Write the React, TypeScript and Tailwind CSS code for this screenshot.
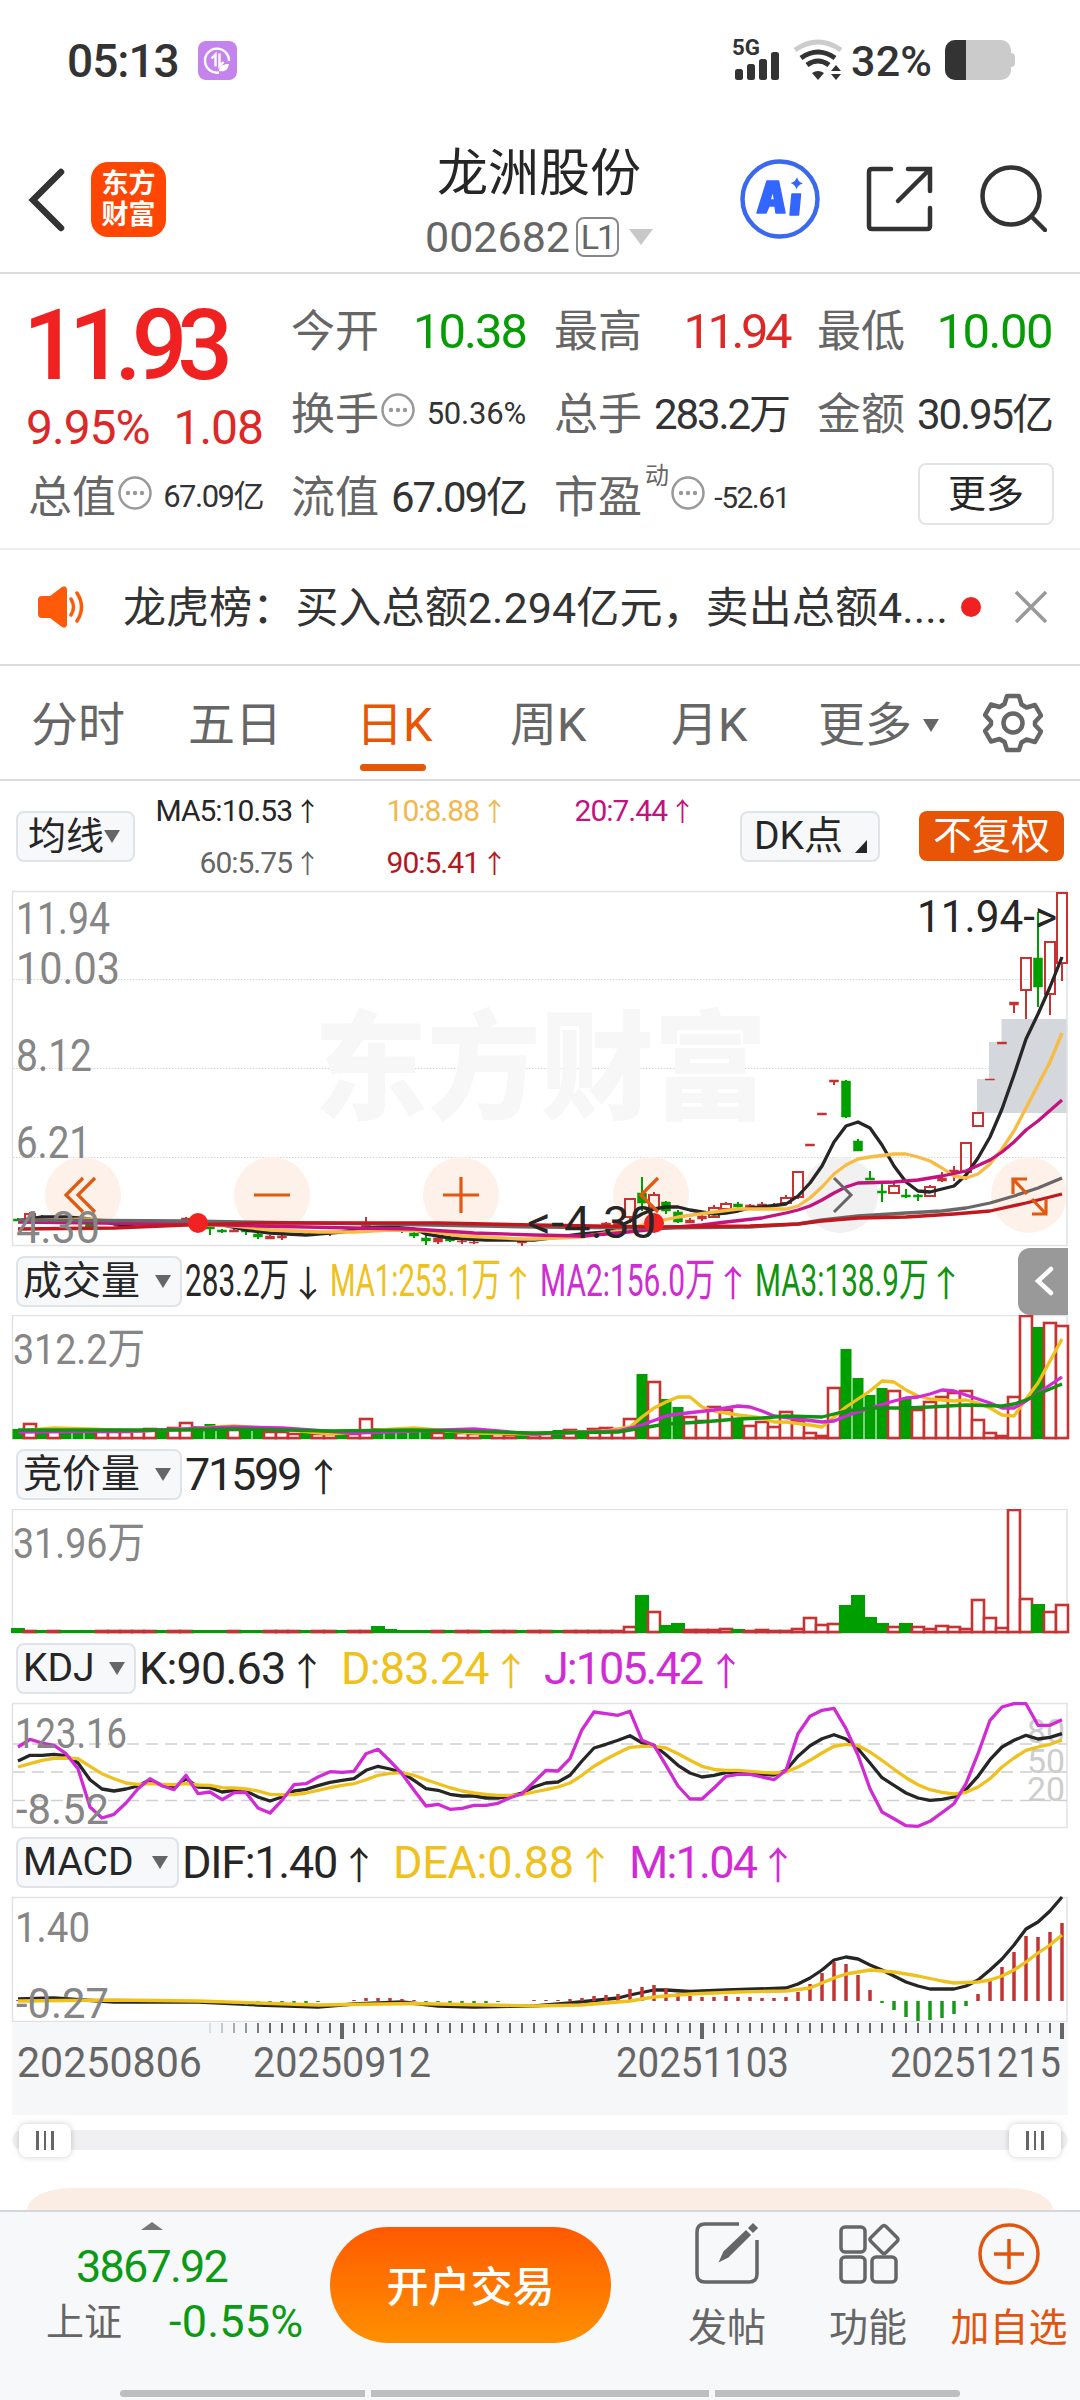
import type { ReactNode } from 'react'
import clsx from 'clsx'

const RED = '#c83232'
const GREEN = '#009f00'
const BLACK = '#262626'
const YELLOW = '#efc11c'
const MAGENTA = '#d02bd4'
const ORANGE = '#e2590f'

type Point = [number, number]

// 88 trading days, 12px apart
const dayX = (i: number) => 18 + i * 12

const smooth = (points: Point[]) => points.map(([i, y]) => `${dayX(i)},${y}`).join(' ')
const series = (values: number[], base: number) =>
  values.map((v, i) => `${dayX(i)},${((v - base) / 3).toFixed(1)}`).join(' ')

const MA5: Point[] = [
  [0, 330], [1, 328], [2, 326], [4, 326], [6, 328], [8, 333], [10, 334], [14, 333], [17, 334], [19, 339], [21, 342],
  [24, 344], [27, 341], [29, 337], [31, 336], [33, 338], [34, 343], [36, 347], [39, 349], [43, 349], [47, 343],
  [49, 341], [50, 336], [51, 330], [52, 323], [53, 318], [54, 316], [55, 316], [56, 319], [57, 321], [58, 323],
  [59, 322], [60, 320], [61, 317], [62, 316], [64, 313], [65, 305], [66, 292], [67, 275], [68, 251], [69, 235],
  [70, 231], [71, 237], [72, 254], [73, 275], [74, 291], [75, 300], [76, 301], [77, 298], [78, 295], [79, 284],
  [80, 267], [81, 246], [82, 218], [83, 184], [84, 148], [85, 123], [86, 96], [87, 66],
]
const MA10: Point[] = [
  [0, 330], [6, 328], [10, 333], [14, 333], [18, 335], [21, 339], [25, 341], [28, 341], [31, 339], [34, 340],
  [37, 345], [42, 348], [43, 348], [47, 346], [49, 342], [51, 337], [53, 331], [55, 326], [58, 321], [60, 318],
  [64, 318], [65, 315], [66, 307], [67, 296], [68, 283], [69, 274], [70, 268], [71, 266], [73, 263], [74, 263],
  [75, 266], [76, 270], [77, 277], [78, 285], [79, 287], [80, 283], [81, 273], [82, 258], [83, 240], [84, 217],
  [85, 194], [86, 171], [87, 142],
]
const MA20: Point[] = [
  [0, 331], [14, 333], [20, 335], [28, 337], [33, 338], [38, 342], [43, 344], [47, 345], [50, 342], [54, 337],
  [57, 334], [59, 331], [62, 327], [64, 322], [65, 319], [66, 315], [67, 309], [68, 302], [69, 296], [70, 292],
  [73, 291], [75, 289], [77, 285], [79, 280], [81, 269], [82, 261], [83, 251], [84, 239], [85, 230], [87, 209],
]
const MA60: Point[] = [
  [0, 329], [14, 330], [30, 333], [43, 336], [53, 337], [61, 336], [65, 333], [67, 329], [70, 325], [74, 322],
  [77, 320], [79, 317], [81, 312], [83, 305], [85, 297], [87, 287],
]
const MA90: Point[] = [
  [0, 338], [8, 337], [14, 334], [20, 332], [35, 332], [43, 334], [53, 336], [61, 335], [65, 333], [67, 330],
  [70, 327], [74, 326], [78, 323], [81, 320], [84, 312], [87, 303],
]

// day, high, body top, body bottom, low, rising
type Candle = [number, number, number, number, number, boolean]
const CANDLES: Candle[] = [
  [0, 327, 328, 330, 330, false], [1, 321, 323, 328, 328, true], [2, 324, 326, 328, 328, false],
  [6, 332, 333, 336, 336, false], [14, 326, 327, 329, 329, true], [16, 336, 336, 338, 344, false],
  [17, 338, 339, 341, 342, false], [18, 338, 339, 341, 341, true], [19, 339, 339, 341, 344, false],
  [20, 340, 343, 346, 348, false], [21, 344, 345, 348, 348, true], [22, 344, 345, 347, 349, true],
  [26, 340, 341, 342, 345, true], [29, 326, 333, 336, 338, true], [31, 334, 335, 336, 338, false],
  [32, 337, 338, 339, 342, false], [33, 341, 342, 345, 347, false], [34, 344, 347, 350, 354, false],
  [35, 346, 347, 351, 353, true], [36, 345, 347, 350, 351, false], [37, 348, 350, 351, 353, true],
  [38, 347, 351, 352, 353, true], [42, 347, 350, 352, 355, true], [45, 344, 345, 346, 347, true],
  [49, 331, 332, 335, 336, true], [50, 329, 330, 334, 335, true], [51, 308, 308, 326, 332, true],
  [52, 286, 302, 312, 320, false], [53, 301, 304, 317, 319, true], [54, 310, 311, 320, 323, false],
  [55, 319, 321, 331, 332, false], [56, 327, 329, 332, 332, true], [57, 323, 325, 328, 330, true],
  [58, 314, 317, 326, 327, true], [59, 311, 313, 318, 319, true], [60, 311, 313, 316, 317, false],
  [61, 313, 314, 316, 317, true], [62, 311, 313, 316, 316, true], [63, 312, 314, 315, 316, true],
  [64, 304, 307, 312, 314, true], [65, 280, 281, 306, 308, true], [66, 253, 253, 255, 255, true],
  [67, 222, 222, 224, 224, true], [68, 189, 189, 191, 194, true], [69, 189, 190, 226, 227, false],
  [70, 248, 250, 260, 260, false], [71, 280, 287, 289, 289, false], [72, 293, 300, 302, 311, false],
  [73, 292, 295, 302, 303, true], [74, 298, 304, 306, 307, false], [75, 303, 304, 306, 310, false],
  [76, 294, 296, 305, 306, true], [77, 281, 287, 290, 291, true], [78, 275, 279, 282, 290, true],
  [79, 252, 252, 281, 289, true], [80, 221, 222, 235, 236, true], [81, 188, 188, 189, 189, true],
  [82, 151, 151, 153, 153, true], [83, 111, 111, 114, 122, true], [84, 67, 67, 99, 128, true],
  [85, 21, 67, 96, 116, false], [86, 50, 51, 103, 124, true], [87, 1, 2, 72, 90, true],
]

// negative = falling day
const VOLUME = [
  -8, 14, -8, 7, -8, -8, -7, 6, 6, 6, 7, 9, -8, 10, 15, -11, -13, -9, 8, -8, -7, 6, 6, 4, -5, 4, 4, -4, 4, 19, -9, -6,
  -6, -6, -6, 5, -4, 5, 4, -5, 4, 3, -5, 3, 5, -7, 8, -7, 9, 10, 9, 19, -63, 56, -38, -30, 21, 17, 31, 28, -17, 12, 16,
  11, 26, 17, 5, 2, 50, -88, -59, -42, -49, 47, -38, 28, 36, 41, 45, 47, 18, 5, 2, 41, 122, -110, 115, 112,
]
const AUCTION = [
  -3, 1, -1, 1, -1, -1, -1, 1, 1, 1, 1, 1, -1, 1, 1, -1, -1, -1, 1, -1, -1, 1, 1, 1, -1, 1, 1, -1, 1, 1, -5, -2, -1,
  -1, -1, 1, -1, 1, 1, -1, 1, 1, -1, 1, 1, -1, 1, 1, 1, 1, 1, 5, -36, 20, -6, -8, 2, 2, 2, 3, -2, 1, 2, 1, 1, 3, 14, 7,
  8, -26, -36, -14, -8, 5, -8, 5, 3, 6, 5, 3, 32, 14, 4, 122, 33, -27, 20, 27,
]
const VOL_MA1: Point[] = [
  [0, 116], [3, 113], [6, 114], [10, 116], [14, 114], [18, 111], [22, 114], [26, 119], [30, 115], [33, 113], [38, 118],
  [43, 119], [49, 116], [51, 112], [52, 102], [53, 93], [54, 87], [55, 82], [56, 82], [57, 92], [58, 96], [60, 100],
  [62, 103], [63, 107], [64, 107], [66, 110], [67, 112], [68, 102], [69, 92], [70, 84], [71, 76], [72, 66], [73, 67],
  [74, 75], [75, 81], [76, 84], [78, 86], [79, 85], [80, 88], [81, 93], [82, 100], [83, 101], [84, 84], [85, 68],
  [86, 46], [87, 24],
]
const VOL_MA2: Point[] = [
  [0, 117], [10, 116], [18, 112], [22, 113], [28, 118], [33, 116], [38, 114], [43, 119], [50, 116], [52, 110],
  [54, 101], [55, 99], [58, 95], [60, 91], [61, 92], [62, 96], [63, 101], [65, 104], [67, 107], [68, 106], [69, 101],
  [71, 93], [73, 86], [74, 83], [75, 82], [76, 79], [77, 75], [78, 76], [79, 80], [80, 84], [81, 88], [82, 93],
  [83, 93], [84, 86], [85, 78], [87, 62],
]
const VOL_MA3: Point[] = [
  [0, 115], [14, 115], [18, 114], [26, 116], [33, 115], [43, 118], [50, 117], [52, 113], [54, 109], [57, 107],
  [60, 104], [62, 103], [64, 101], [67, 102], [69, 96], [71, 93], [74, 93], [76, 92], [79, 90], [82, 91], [83, 89],
  [84, 85], [85, 79], [86, 74], [87, 69],
]

const K = [
  362, 345, 345, 342, 346, 368, 418, 446, 452, 446, 437, 418, 435, 443, 415, 440, 442, 455, 450, 452, 470, 482, 470,
  452, 447, 436, 426, 420, 415, 390, 378, 386, 397, 420, 445, 450, 462, 467, 467, 473, 473, 467, 458, 440, 428, 425,
  405, 362, 323, 312, 300, 286, 307, 315, 343, 375, 398, 410, 405, 397, 395, 398, 402, 404, 390, 348, 316, 295, 283,
  296, 325, 368, 412, 435, 458, 473, 480, 477, 470, 448, 408, 358, 320, 300, 285, 296, 291, 280,
]
const D = [
  380, 370, 360, 354, 353, 355, 378, 400, 415, 428, 432, 430, 432, 433, 430, 434, 435, 442, 443, 446, 452, 462, 463,
  463, 458, 450, 442, 435, 430, 418, 405, 399, 397, 405, 418, 430, 442, 452, 458, 462, 465, 465, 463, 455, 448, 440,
  428, 405, 378, 357, 338, 321, 318, 318, 323, 340, 360, 378, 387, 390, 390, 393, 396, 398, 395, 380, 360, 338, 318,
  312, 316, 335, 360, 387, 412, 433, 448, 456, 461, 456, 440, 415, 380, 353, 330, 320, 312, 300,
]
const J = [
  320, 297, 308, 315, 340, 385, 500, 533, 522, 488, 445, 415, 436, 448, 405, 460, 455, 478, 457, 457, 503, 518, 480,
  433, 430, 410, 394, 396, 393, 340, 327, 362, 400, 450, 497, 492, 507, 504, 495, 495, 489, 472, 460, 425, 390, 392,
  355, 268, 215, 220, 225, 213, 300, 315, 375, 437, 476, 476, 443, 408, 402, 402, 410, 418, 390, 280, 228, 210, 204,
  265, 345, 445, 515, 535, 556, 558, 543, 517, 490, 430, 340, 240, 200, 190, 190, 255, 255, 238,
]

const MACD_BARS = [
  1, 2, 2, 0, 2, 1, -1, -1, -1, -1, -1, 0, 0, 0, 1, 0, -1, -2, -3, -4, -4, -4, -3, -2, -2, -1, 0, 0, 1, 3, 3, 3, 2, 1,
  -1, -1, -2, -2, -2, -2, -1, 0, 0, 1, 1, 1, 2, 3, 5, 6, 7, 12, 14, 16, 13, 8, 5, 4, 4, 5, 4, 4, 3, 3, 4, 9, 17, 28,
  39, 37, 26, 11, -2, -9, -16, -20, -19, -17, -13, -5, 7, 20, 34, 49, 65, 64, 69, 78,
]
const DIF: Point[] = [
  [0, 102], [3, 101], [8, 105], [15, 105], [20, 108], [25, 110], [28, 107], [32, 105], [35, 109], [38, 110],
  [43, 109], [46, 106], [50, 101], [51, 98], [53, 93], [54, 93], [56, 94.5], [59, 93], [64, 91], [65, 87], [66, 81],
  [67, 73], [68, 63], [69, 60], [70, 62], [71, 68], [72, 73], [73, 79], [74, 85], [75, 89], [76, 92], [78, 92],
  [79, 89], [80, 83], [81, 73], [82, 62], [83, 48], [84, 32], [85, 25], [86, 14], [87, 0],
]
const DEA: Point[] = [
  [0, 104], [8, 103], [15, 104], [20, 106], [25, 108], [33, 106.5], [43, 109], [47, 108], [51, 104], [53, 100],
  [56, 97], [60, 95], [64, 94], [66, 91], [67, 86], [68, 81], [69, 77], [70, 75], [71, 73], [73, 75], [75, 79],
  [77, 84], [78, 86], [80, 85], [81, 83], [82, 79], [83, 73], [84, 65], [85, 56], [86, 48], [87, 38],
]

function Line({ points, color, width = 3.3 }: { points: string; color: string; width?: number }) {
  return <polyline points={points} fill="none" stroke={color} strokeWidth={width} strokeLinejoin="round" />
}

function Frame({ height }: { height: number }) {
  return <rect x="12.5" y="0.5" width="1054.5" height={height - 1} fill="none" stroke="#e2e2e4" strokeWidth="1.5" />
}

function Label({ x, y, w, fill = '#868686', size = 45, children }: {
  x: number; y: number; w: number; fill?: string; size?: number; children: string
}) {
  return (
    <text x={x} y={y} fontSize={size} fill={fill} textLength={w} lengthAdjust="spacingAndGlyphs">
      {children}
    </text>
  )
}

function Arrow({ down = false, className }: { down?: boolean; className?: string }) {
  return (
    <span className={clsx("inline-flex justify-center font-['Noto_Sans_CJK_SC'] tracking-normal", className)}>
      {down ? '↓' : '↑'}
    </span>
  )
}

function Caret({ className = 'text-[#666]' }: { className?: string }) {
  return (
    <svg viewBox="0 0 16 13" className={clsx('w-4 h-[13px] shrink-0', className)}>
      <path d="M0 0h16L8 13z" fill="currentColor" />
    </svg>
  )
}

function StatusBar() {
  return (
    <div className="flex h-[120px] items-center pl-[67px] pr-[65px] text-[#333]">
      <span className="w-[131px] pt-0.5 text-[46px] font-medium tracking-[-1px]">05:13</span>
      <div className="size-[39px] rounded-lg bg-[#c583ee]">
        <svg viewBox="0 0 39 39" className="size-full" fill="none" stroke="#fff" strokeWidth="2.4">
          <path d="M21 31.5A12 12 0 1 1 31 20" />
          <path d="M13.500 17.500l4-4v12M21.500 12.500v12.500l4-4" />
          <path d="M21 30c0-5 4-7 10-7-1 6-4 8-10 7z" fill="#fff" stroke="none" />
        </svg>
      </div>
      <svg viewBox="0 0 48 42" className="ml-auto mr-0.5 h-[42px] w-12 overflow-visible">
        <text x="-1" y="16" fontSize="22" fontWeight="700" fill="#333" textLength="28" lengthAdjust="spacingAndGlyphs">
          5G
        </text>
        <g fill="#333">
          <rect x="2" y="30" width="8" height="11" rx="2.5" />
          <rect x="14" y="25" width="8" height="16" rx="2.5" />
          <rect x="26" y="20" width="8" height="21" rx="2.5" />
          <rect x="38" y="13" width="8" height="28" rx="2.5" />
        </g>
      </svg>
      <svg viewBox="0 0 50 42" className="ml-2.5 h-[42px] w-[50px]" fill="none" strokeWidth="5">
        <path d="M2 11q23-16 46 0" stroke="#ccc" />
        <path d="M8 19q17-12 34 0M14 26q11-8 22 0" stroke="#333" />
        <path d="M19 34q6-4 12 0l-6 7zM43 26l5 6H38zM38 35h10l-5 6z" fill="#333" />
      </svg>
      <span className="ml-2 w-[94px] pt-0.5 text-[43px]/[48px] font-medium tracking-[0.2px]">32%</span>
      <div className="flex h-10 w-[66px] overflow-hidden rounded-[10px] bg-[#cbcbcb]">
        <div className="w-[21px] bg-[#333]" />
      </div>
      <div className="h-3.5 w-1 rounded-r bg-[#cbcbcb]" />
    </div>
  )
}

function Header() {
  return (
    <div className="flex h-[154px] items-start border-b-2 border-[#dcdcdc] pl-[28px]">
      <svg viewBox="0 0 38 64" className="mt-[48px] h-16 w-[38px]">
        <path d="M33 4L5 32l28 28" fill="none" stroke="#333" strokeWidth="6.5" strokeLinecap="round" />
      </svg>
      <div className="ml-[25px] mt-[42px] flex size-[75px] flex-col items-center justify-center rounded-[17px] bg-[#ff4602] text-[27px]/[31px] font-bold text-white">
        <span>东方</span>
        <span>财富</span>
      </div>
      <div className="ml-[253px] mt-[22px] flex w-[240px] flex-col items-center">
        <h1 className="text-[51px]/[64px] text-[#262626]">龙洲股份</h1>
        <div className="flex h-[62px] items-center text-[#666]">
          <span className="text-[43px]">002682</span>
          <span className="ml-1.5 flex h-10 w-[43px] items-center justify-center rounded-lg border-2 border-[#888] text-[34px] tracking-[-2px]">
            L1
          </span>
          <svg viewBox="0 0 24 16" className="ml-2.5 h-4 w-6">
            <path d="M0 0h24L12 16z" fill="#c8c8c8" />
          </svg>
        </div>
      </div>
      <svg viewBox="0 0 80 80" className="ml-[81px] mt-[39px] size-20">
        <circle cx="40" cy="40" r="37.5" fill="none" stroke="#3a68ee" strokeWidth="4.5" />
        <path
          d="M27 22h11.500l6.500 32h-9l-1-7h-6l-3 7h-9zM33 31l-3 10h4.500z"
          fill="#3366ff"
          fillRule="evenodd"
          stroke="#3366ff"
          strokeWidth="1.500"
          strokeLinejoin="round"
        />
        <path d="M52 35h8.500l-2 21h-8.500z" fill="#3366ff" stroke="#3366ff" strokeWidth="1.500" strokeLinejoin="round" />
        <path d="M57 18q1 5 6 6.500-5 1-6.500 6-1-5-6-6.500 5-1 6.500-6z" fill="#3366ff" />
      </svg>
      <svg viewBox="0 0 68 68" className="ml-[45px] mt-[45px] size-[68px]" fill="none" stroke="#333" strokeWidth="4.500" strokeLinecap="round">
        <path d="M26 4H7q-3 0-3 3v54q0 3 3 3h55q3 0 3-3V43" />
        <path d="M43 4h22v22M64 5L33 36" />
      </svg>
      <svg viewBox="0 0 68 68" className="ml-[46px] mt-[44px] size-[68px]" fill="none" stroke="#333" strokeWidth="4.500" strokeLinecap="round">
        <circle cx="32" cy="32" r="28.500" />
        <path d="M53 53l13 13" />
      </svg>
    </div>
  )
}

function Info() {
  return (
    <svg viewBox="0 0 34 34" className="ml-0.5 size-[34px] -mt-2.5 shrink-0">
      <circle cx="17" cy="17" r="15.500" fill="none" stroke="#999" strokeWidth="2.5" />
      <g fill="#999">
        <circle cx="10" cy="17" r="2.2" />
        <circle cx="17" cy="17" r="2.2" />
        <circle cx="24" cy="17" r="2.2" />
      </g>
    </svg>
  )
}

function Quote({ label, extra, value, className }: {
  label: string; extra?: ReactNode; value: string; className: string
}) {
  return (
    <div className="flex h-[83px] items-center whitespace-nowrap">
      <span className="text-[44px] text-[#666]">{label}</span>
      {extra}
      <span className={clsx('ml-auto', className)}>{value}</span>
    </div>
  )
}

const MID = 'text-[42px] tracking-[-2.1px] text-[#333]'

function Quotes() {
  return (
    <div className="grid h-[276px] grid-cols-[235px_235px_235px_235px] gap-x-[28px] border-b-2 border-[#ececec] pl-[28px] pt-[16px]">
      <div>
        <div className="-ml-[5px] h-[101px] text-[98px]/[112px] font-medium tracking-[-10px] text-[#f02121]">11.93</div>
        <div className="-ml-0.5 flex h-[65px] items-center justify-between pt-[9px] text-[48px] tracking-[-1px] text-[#dd2828]">
          <span>9.95%</span>
          <span>1.08</span>
        </div>
        <Quote label="总值" extra={<Info />} value="67.09亿" className="text-[31px] tracking-[-1.5px] text-[#333]" />
      </div>
      <div>
        <Quote label="今开" value="10.38" className="text-[49px] tracking-[-2px] text-[#069c06]" />
        <Quote label="换手" extra={<Info />} value="50.36%" className="text-[31px] tracking-[-0.2px] text-[#333]" />
        <Quote label="流值" value="67.09亿" className={MID} />
      </div>
      <div>
        <Quote label="最高" value="11.94" className="text-[49px] tracking-[-3.5px] text-[#dd2828]" />
        <Quote label="总手" value="283.2万" className={MID} />
        <Quote
          label="市盈"
          extra={
            <>
              <span className="-mt-11 ml-[3px] text-[24px] text-[#666]">动</span>
              <Info />
            </>
          }
          value="-52.61"
          className="text-[30px] tracking-[-1.5px] text-[#333]"
        />
      </div>
      <div>
        <Quote label="最低" value="10.00" className="text-[49px] tracking-[-1.5px] text-[#069c06]" />
        <Quote label="金额" value="30.95亿" className={MID} />
        <button className="ml-[101px] mt-[7px] block h-[62px] w-[136px] rounded-lg border-2 border-[#e2e4e6] text-[38px]/[54px] text-[#262626]">
          更多
        </button>
      </div>
    </div>
  )
}

function Notice() {
  return (
    <div className="flex h-[116px] items-center border-b-2 border-[#dcdcdc] pl-[37px]">
      <svg viewBox="0 0 50 42" className="h-[42px] w-[50px]">
        <path d="M1 14q0-4 4-4h8L25 1q4-2 5 2v36q-1 4-5 2L13 32H5q-4 0-4-4z" fill="#ff5a0a" />
        <path d="M34 13q5 8 0 16M40 7q9 14 0 28" fill="none" stroke="#ff5a0a" strokeWidth="3.5" strokeLinecap="round" />
      </svg>
      <p className="ml-[36px] w-[832px] whitespace-nowrap pt-0.5 text-[43px] tracking-[0.1px] text-[#333]">
        龙虎榜：买入总额2.294亿元，卖出总额4....
      </p>
      <span className="ml-[6px] size-5 rounded-full bg-[#f02121]" />
      <svg viewBox="0 0 34 34" className="ml-[33px] size-[34px]">
        <path d="M2 2l30 30M32 2L2 32" stroke="#999" strokeWidth="3.5" />
      </svg>
    </div>
  )
}

function Tabs() {
  return (
    <div className="flex h-[115px] items-center border-b-2 border-[#dcdcdc] pl-[31px] pt-[6px] text-[47px] text-[#666]">
      <span className="w-[157px]">分时</span>
      <span className="w-[168px]">五日</span>
      <span className="relative w-[154px] text-[#e85504]">
        日K
        <i className="absolute -bottom-[10px] left-1 h-[7px] w-[66px] rounded bg-[#e85504]" />
      </span>
      <span className="w-[161px]">周K</span>
      <span className="w-[147px]">月K</span>
      <span className="w-[105px]">更多</span>
      <Caret />
      <svg viewBox="0 0 60 60" className="ml-[44px] -mt-1.5 size-[60px]" fill="none" stroke="#666" strokeWidth="4.500" strokeLinejoin="round">
        <path d="M24 3h12l2.500 8.500 5 3 8.500-2.500 6 10.500-6 6.500v3l6 6.500-6 10.500-8.500-2.500-5 3L36 57H24l-2.500-8-5-3L8 48.500 2 38l6-6.500v-3L2 22l6-10.500 8.500 2.500 5-3z" />
        <circle cx="30" cy="30" r="9.500" />
      </svg>
    </div>
  )
}

const PILL = 'flex items-center rounded-lg border-2 border-[#e0e3e7] bg-[#f6f8fa] text-[#262626]'

function Averages() {
  return (
    <div className="flex h-[110px] items-center pl-4">
      <div className={clsx(PILL, 'h-[51px] w-[119px] pl-2.5 text-[38px]')}>
        均线
        <Caret />
      </div>
      <div className="grid h-[104px] w-[555px] grid-cols-[180px_187px_188px] items-center text-right text-[30px]/[40px] tracking-[-1px]">
        <span className="text-[#262626]">MA5:10.53<Arrow className="ml-2 w-[15px] text-[26px]" /></span>
        <span className="text-[#f2b84b]">10:8.88<Arrow className="ml-2 w-[15px] text-[26px]" /></span>
        <span className="text-[#c4127f]">20:7.44<Arrow className="ml-2 w-[15px] text-[26px]" /></span>
        <span className="text-[#666]">60:5.75<Arrow className="ml-2 w-[15px] text-[26px]" /></span>
        <span className="text-[#b5171f]">90:5.41<Arrow className="ml-2 w-[15px] text-[26px]" /></span>
      </div>
      <div className={clsx(PILL, 'ml-[50px] h-[51px] w-[140px] pl-3 text-[39px]')}>
        DK点
        <svg viewBox="0 0 12 13" className="ml-3 mt-5 h-[13px] w-3">
          <path d="M12 0v13H0z" fill="#262626" />
        </svg>
      </div>
      <div className="ml-[39px] flex h-[50px] w-[145px] items-center justify-center rounded-lg bg-[#e95506] text-[39px] text-white">
        不复权
      </div>
    </div>
  )
}

function CandleMark({ candle: [i, high, top, bottom, low, up] }: { candle: Candle }) {
  const x = dayX(i)
  const color = up ? RED : GREEN
  const hollow = up && bottom - top > 4
  return (
    <g stroke={color} strokeWidth="2">
      <path d={`M${x} ${high}V${top}M${x} ${bottom}V${low}`} />
      {hollow ? (
        <rect x={x - 5} y={top} width="10" height={bottom - top} fill="none" />
      ) : (
        <rect x={x - 4.5} y={top} width="9" height={Math.max(bottom - top, 1)} fill={color} strokeWidth="0.5" />
      )}
    </g>
  )
}

function PriceChart() {
  return (
    <svg viewBox="0 0 1080 356" className="block h-[356px] w-[1080px] overflow-visible">
      {[88.5, 177.5, 266.5].map((y) => (
        <path key={y} d={`M13 ${y}H1067`} stroke="#d4d4d4" strokeWidth="1" strokeDasharray="1.500 1.500" />
      ))}
      <text
        x="314"
        y="219"
        fontSize="118"
        fontWeight="900"
        fill="#f7f7f7"
        textLength="453"
        lengthAdjust="spacingAndGlyphs"
      >
        东方财富
      </text>
      <path d="M977 222V188h12v-37h12.500v-23H1067v94z" fill="#d4d7db" />
      {[83, 272, 461, 651, 1029].map((x) => (
        <circle key={x} cx={x} cy="304" r="38" fill="#fef1ea" />
      ))}
      <circle cx="840" cy="304" r="38" fill="#f1f1f1" />
      <Frame height={355} />
      {CANDLES.map((c) => (
        <CandleMark key={c[0]} candle={c} />
      ))}
      <Line points={smooth(MA5)} color={BLACK} />
      <Line points={smooth(MA10)} color="#f8bb44" />
      <Line points={smooth(MA20)} color="#c4127f" />
      <Line points={smooth(MA60)} color="#6b6767" />
      <Line points={smooth(MA90)} color="#c1171f" />
      <circle cx="198" cy="332" r="10" fill="#f32222" />
      <circle cx="654" cy="332" r="10" fill="#f32222" />
      <g fill="none" stroke={ORANGE} strokeWidth="3.200">
        <path d="M83 287L66 304l17 17M95 287L78 304l17 17" />
        <path d="M254 304h36M443 304h36M461 286v36" />
        <path d="M658 287L641 304l17 17" />
        <path d="M1027 288h-14v15M1013 288l14 15M1032 323h14v-15M1046 323l-14-15" />
      </g>
      <path d="M834 287l17 17-17 17" fill="none" stroke="#666" strokeWidth="3" />
      <Label x={16} y={43} w={94}>11.94</Label>
      <Label x={16} y={93} w={104}>10.03</Label>
      <Label x={16} y={180} w={76}>8.12</Label>
      <Label x={16} y={267} w={75}>6.21</Label>
      <Label x={16} y={352} w={84}>4.30</Label>
      <Label x={917} y={41} w={140} fill={BLACK}>{'11.94->'}</Label>
      <Label x={527} y={347} w={129} fill={BLACK}>{'<-4.30'}</Label>
    </svg>
  )
}

function IndicatorRow({ name, pill, className = 'h-[69px]', children }: {
  name: string; pill: string; className?: string; children: ReactNode
}) {
  return (
    <div className={clsx('flex items-center pl-4 text-[45px] text-[#262626]', className)}>
      <div className={clsx(PILL, 'h-[51px] justify-between pl-[5px] pr-[9px] text-[39px]', pill)}>
        {name}
        <Caret />
      </div>
      {children}
    </div>
  )
}

// Value condensed horizontally so that four of them fit in one row
function Narrow({ className, scale, children }: { className: string; scale: string; children: string }) {
  return (
    <span className={clsx('whitespace-nowrap', className)}>
      <span className={clsx('inline-block origin-left', scale)}>{children}</span>
    </span>
  )
}

function Bars({ values, wide = false }: { values: number[]; wide?: boolean }) {
  return (
    <>
      {values.map((v, i) => {
        const h = Math.abs(v)
        const x = dayX(i)
        return v > 0 ? (
          <rect key={i} x={x - 6} y={123 - h} width="12" height={h} fill="#fff" stroke={RED} strokeWidth="2.6" />
        ) : (
          <rect key={i} x={wide ? x - 7 : x - 5.5} y={122 - h} width={wide ? 14 : 11} height={h + 2} fill={GREEN} />
        )
      })}
    </>
  )
}

function VolumeChart() {
  return (
    <svg viewBox="0 0 1080 125" className="block h-[125px] w-[1080px]">
      <Frame height={125} />
      <Bars values={VOLUME} />
      <Line points={smooth(VOL_MA1)} color={YELLOW} />
      <Line points={smooth(VOL_MA2)} color={MAGENTA} />
      <Line points={smooth(VOL_MA3)} color="#109310" />
      <Label x={13} y={49} w={132} size={43}>312.2万</Label>
    </svg>
  )
}

function AuctionChart() {
  return (
    <svg viewBox="0 0 1080 125" className="block h-[125px] w-[1080px]">
      <Frame height={125} />
      <Bars values={AUCTION} wide />
      <Label x={13} y={49} w={132} size={43}>31.96万</Label>
    </svg>
  )
}

function KdjChart() {
  return (
    <svg viewBox="0 0 1080 125" className="block h-[125px] w-[1080px] overflow-visible">
      <Frame height={125} />
      {[41, 69, 97.5].map((y) => (
        <path key={y} d={`M13 ${y}H1067`} stroke="#d0d0d0" strokeWidth="1.300" strokeDasharray="12 7" />
      ))}
      <Label x={1027} y={40} w={38} size={34} fill="#cdcdcd">80</Label>
      <Label x={1027} y={70} w={38} size={34} fill="#cdcdcd">50</Label>
      <Label x={1027} y={98} w={38} size={34} fill="#cdcdcd">20</Label>
      <Line points={series(K, 188)} color={BLACK} />
      <Line points={series(D, 188)} color={YELLOW} />
      <Line points={series(J, 188)} color={MAGENTA} />
      <Label x={15} y={45} w={112} size={42}>123.16</Label>
      <Label x={16} y={121} w={93} size={42}>-8.52</Label>
    </svg>
  )
}

function MacdChart() {
  return (
    <svg viewBox="0 0 1080 125" className="block h-[125px] w-[1080px] overflow-visible">
      <Frame height={125} />
      <Line points={smooth(DIF)} color={BLACK} />
      {MACD_BARS.map((v, i) => (
        <path key={i} d={`M${dayX(i)} 104v${-v}`} stroke={v > 0 ? '#c23434' : '#189a18'} strokeWidth="3.500" />
      ))}
      <Line points={smooth(DEA)} color={YELLOW} />
      <Label x={15} y={45} w={75} size={42}>1.40</Label>
      <Label x={16} y={121} w={93} size={42}>-0.27</Label>
    </svg>
  )
}

function TimeAxis() {
  const ticks = Array.from({ length: 72 }, (_, n) => n + 16)
  return (
    <div className="mx-3 h-[93px] bg-[#f6f7f9]">
      <svg viewBox="12 0 1056 93" className="block h-[93px] w-[1056px]">
        {ticks.map((i) => {
          const major = i === 27 || i === 57 || i === 87
          return (
            <path
              key={i}
              d={`M${dayX(i)} 1v${major ? 16 : 10}`}
              stroke="#666"
              strokeWidth={major ? 4 : 2}
              opacity={Math.min(1, (i - 15) / 6)}
            />
          )
        })}
        <Label x={17} y={55} w={185} size={42} fill="#666">20250806</Label>
        <Label x={253} y={55} w={178} size={42} fill="#666">20250912</Label>
        <Label x={616} y={55} w={173} size={42} fill="#666">20251103</Label>
        <Label x={890} y={55} w={171} size={42} fill="#666">20251215</Label>
      </svg>
    </div>
  )
}

function Handle() {
  return (
    <div className="flex h-[33px] w-[52px] items-center justify-center gap-[5px] rounded-lg bg-white shadow-[0_0_6px_rgba(0,0,0,0.2)]">
      <i className="h-[19px] w-[2.500px] bg-[#666]" />
      <i className="h-[19px] w-[2.500px] bg-[#666]" />
      <i className="h-[19px] w-[2.500px] bg-[#666]" />
    </div>
  )
}

function RangeSlider() {
  return (
    <div className="mx-3 flex h-[50px] items-center">
      <div className="flex h-5 w-full items-center justify-between rounded-full bg-[#f0f0f2] px-[7px]">
        <Handle />
        <Handle />
      </div>
    </div>
  )
}

function NavItem({ label, className, children }: { label: string; className: string; children: ReactNode }) {
  return (
    <div className={clsx('flex flex-col items-center text-[39px]/[50px]', className)}>
      <svg viewBox="0 0 64 64" className="mb-[18px] size-16" fill="none" stroke="currentColor" strokeWidth="3.500">
        {children}
      </svg>
      {label}
    </div>
  )
}

function BottomBar() {
  return (
    <div className="flex h-[190px] flex-col border-t-2 border-[#d3d7db] bg-[#f6f8fa]">
      <div className="flex h-[178px]">
        <div className="flex w-[330px] flex-col pt-2.5">
          <svg viewBox="0 0 22 8" className="ml-[141px] h-2 w-[22px]">
            <path d="M11 0l11 8H0z" fill="#777" />
          </svg>
          <span className="mt-[9px] pl-[76px] text-[45px]/[56px] tracking-[-1.8px] text-[#0c9a14]">3867.92</span>
          <div className="flex h-[54px] items-center">
            <span className="w-[124px] pl-[46px] text-[38px] text-[#666]">上证</span>
            <span className="ml-[45px] text-[45px] tracking-[0.2px] text-[#0c9a14]">-0.55%</span>
          </div>
        </div>
        <button className="mt-[15px] h-[116px] w-[281px] rounded-full bg-linear-to-b from-[#ff5800] to-[#ff8f00] pt-1 text-[42px] font-medium text-white">
          开户交易
        </button>
        <div className="flex pt-[9px]">
          <NavItem label="发帖" className="ml-[57px] w-[118px] text-[#666]">
            <path d="M44 3H10q-8 0-8 8v42q0 8 8 8h44q8 0 8-8V19" />
            <path d="M25 40l4-9L51 10l4 4-22 22zM54 7l4-4 4 4-4 4z" fill="currentColor" strokeWidth="1.500" />
          </NavItem>
          <NavItem label="功能" className="ml-[23px] w-[118px] text-[#666]">
            <rect x="5" y="6" width="24" height="25" rx="4" />
            <rect x="5" y="36" width="24" height="25" rx="4" />
            <rect x="36" y="36" width="24" height="25" rx="4" />
            <path d="M46 5.500q2-2 4 0l11 11q2 2 0 4l-11 11q-2 2-4 0l-11-11q-2-2 0-4z" />
          </NavItem>
          <NavItem label="加自选" className="ml-[22px] w-[120px] text-[#e0560e]">
            <circle cx="32" cy="33" r="29" />
            <path d="M17 33h30M32 18v30" />
          </NavItem>
        </div>
      </div>
      <div className="ml-[120px] flex h-[7px] w-[840px] gap-1.5 overflow-hidden rounded-full">
        <i className="w-[245px] bg-[#bcbec0]" />
        <i className="w-[338px] bg-[#bcbec0]" />
        <i className="w-[245px] bg-[#bcbec0]" />
      </div>
    </div>
  )
}

export default function App() {
  return (
    <div className="flex h-[2400px] w-[1080px] flex-col overflow-hidden bg-white font-[Roboto,'Noto_Sans_CJK_SC',sans-serif]">
      <StatusBar />
      <Header />
      <Quotes />
      <Notice />
      <Tabs />
      <Averages />
      <PriceChart />

      <IndicatorRow name="成交量" pill="w-[166px]" className="h-[68px]">
        <Narrow className="ml-[3px] w-[116px]" scale="scale-x-[0.66]">283.2万</Narrow>
        <Arrow down className="w-[14px] text-[36px]" />
        <Narrow className="ml-[15px] w-[181px] text-[#efc11c]" scale="scale-x-[0.65]">MA1:253.1万</Narrow>
        <Arrow className="w-[14px] text-[36px] text-[#efc11c]" />
        <Narrow className="ml-[15px] w-[186px] text-[#d02bd4]" scale="scale-x-[0.665]">MA2:156.0万</Narrow>
        <Arrow className="w-[14px] text-[36px] text-[#d02bd4]" />
        <Narrow className="ml-[15px] w-[184px] text-[#109310]" scale="scale-x-[0.66]">MA3:138.9万</Narrow>
        <Arrow className="w-[14px] text-[36px] text-[#109310]" />
        <div className="ml-auto mr-3 flex h-[67px] w-[50px] items-center justify-center rounded-l-xl bg-[#999]">
          <svg viewBox="0 0 20 30" className="ml-0.5 h-[30px] w-5" fill="none" stroke="#fff" strokeWidth="4.500" strokeLinecap="round">
            <path d="M17 3L4 15l13 12" />
          </svg>
        </div>
      </IndicatorRow>
      <VolumeChart />

      <IndicatorRow name="竞价量" pill="w-[166px]">
        <span className="ml-[3px] w-[131px] tracking-[-2.3px]">71599</span>
        <Arrow className="w-[15px] text-[38px]" />
      </IndicatorRow>
      <AuctionChart />

      <IndicatorRow name="KDJ" pill="w-[120px]">
        <span className="ml-[3px] w-[160px] tracking-[-0.8px]">K:90.63</span>
        <Arrow className="w-[16px] text-[38px]" />
        <span className="ml-[26px] w-[162px] tracking-[-0.8px] text-[#efc11c]">D:83.24</span>
        <Arrow className="w-[16px] text-[38px] text-[#efc11c]" />
        <span className="ml-[25px] w-[174px] tracking-[-2px] text-[#d02bd4]">J:105.42</span>
        <Arrow className="w-[16px] text-[38px] text-[#d02bd4]" />
      </IndicatorRow>
      <KdjChart />

      <IndicatorRow name="MACD" pill="w-[163px]">
        <span className="ml-[3px] w-[169px] tracking-[-1.3px]">DIF:1.40</span>
        <Arrow className="w-[16px] text-[38px]" />
        <span className="ml-[26px] w-[194px] tracking-[-0.3px] text-[#efc11c]">DEA:0.88</span>
        <Arrow className="w-[16px] text-[38px] text-[#efc11c]" />
        <span className="ml-[26px] w-[141px] tracking-[-1.8px] text-[#d02bd4]">M:1.04</span>
        <Arrow className="w-[16px] text-[38px] text-[#d02bd4]" />
      </IndicatorRow>
      <MacdChart />

      <TimeAxis />
      <RangeSlider />
      <div className="mx-[27px] mt-[23px] h-[22px] shrink-0 rounded-t-[44px_22px] bg-[#fcede4]" />
      <BottomBar />
    </div>
  )
}
